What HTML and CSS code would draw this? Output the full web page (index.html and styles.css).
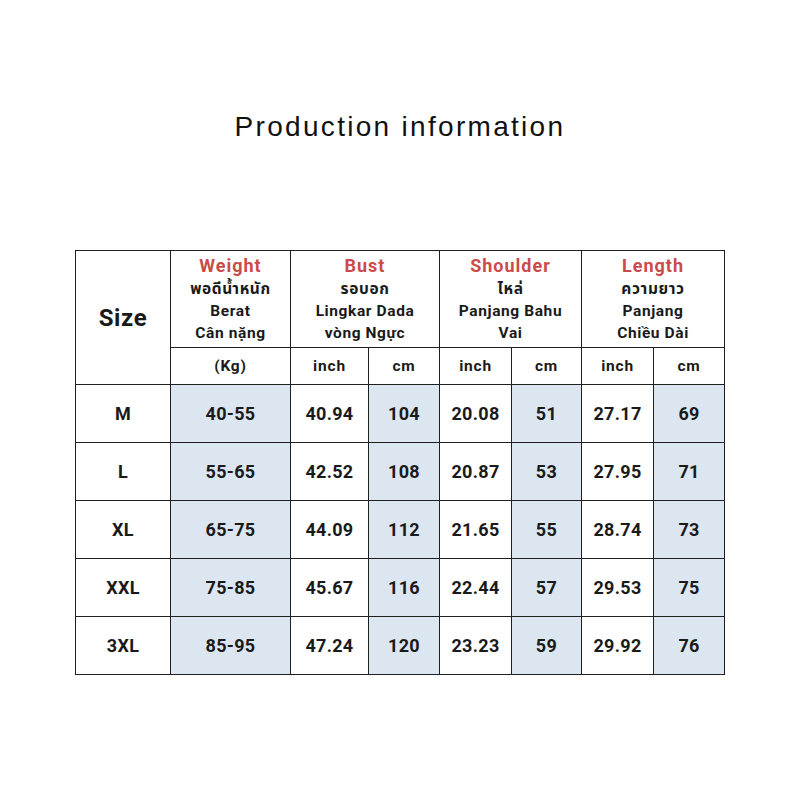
FILE: index.html
```html
<!DOCTYPE html>
<html>
<head>
<meta charset="utf-8">
<link rel="stylesheet" href="styles.css">
</head>
<body>
<div class="page">
  <h1 class="title">Production information</h1>
  <table class="size-table">
    <colgroup>
      <col class="c-size"><col class="c-weight"><col class="c-bi"><col class="c-bc"><col class="c-si"><col class="c-sc"><col class="c-li"><col class="c-lc">
    </colgroup>
    <tr class="head">
      <th rowspan="2" class="size-head">Size</th>
      <th><span class="red">Weight</span><br>พอดีน้ำหนัก<br>Berat<br>Cân nặng</th>
      <th colspan="2"><span class="red">Bust</span><br>รอบอก<br>Lingkar Dada<br>vòng Ngực</th>
      <th colspan="2"><span class="red">Shoulder</span><br>ไหล่<br>Panjang Bahu<br>Vai</th>
      <th colspan="2"><span class="red">Length</span><br>ความยาว<br>Panjang<br>Chiều Dài</th>
    </tr>
    <tr class="sub">
      <td>(Kg)</td><td>inch</td><td>cm</td><td>inch</td><td>cm</td><td>inch</td><td>cm</td>
    </tr>
    <tr class="row"><td>M</td><td class="s">40-55</td><td>40.94</td><td class="s">104</td><td>20.08</td><td class="s">51</td><td>27.17</td><td class="s">69</td></tr>
    <tr class="row"><td>L</td><td class="s">55-65</td><td>42.52</td><td class="s">108</td><td>20.87</td><td class="s">53</td><td>27.95</td><td class="s">71</td></tr>
    <tr class="row"><td>XL</td><td class="s">65-75</td><td>44.09</td><td class="s">112</td><td>21.65</td><td class="s">55</td><td>28.74</td><td class="s">73</td></tr>
    <tr class="row"><td>XXL</td><td class="s">75-85</td><td>45.67</td><td class="s">116</td><td>22.44</td><td class="s">57</td><td>29.53</td><td class="s">75</td></tr>
    <tr class="row"><td>3XL</td><td class="s">85-95</td><td>47.24</td><td class="s">120</td><td>23.23</td><td class="s">59</td><td>29.92</td><td class="s">76</td></tr>
  </table>
</div>
</body>
</html>
```

FILE: styles.css
```css
html, body {
  margin: 0;
  padding: 0;
  background: #fff;
}
.page {
  width: 800px;
  height: 800px;
  display: flex;
  flex-direction: column;
  align-items: center;
}
.title {
  margin: 110px 0 0 0;
  font-family: "Liberation Sans", Arial, sans-serif;
  font-weight: normal;
  font-size: 28px;
  line-height: 34px;
  letter-spacing: 2.3px;
  color: #111;
}
.size-table {
  margin-top: 106px;
  border-collapse: collapse;
  table-layout: fixed;
  width: 650px;
  font-family: Roboto, "Noto Sans", "Noto Sans Thai", "DejaVu Sans", sans-serif;
  color: #1a1a1a;
}
.c-size { width: 95px; }
.c-weight { width: 120px; }
.c-bi { width: 78px; }
.c-bc { width: 71px; }
.c-si { width: 72px; }
.c-sc { width: 70px; }
.c-li { width: 72px; }
.c-lc { width: 71px; }
.size-table th, .size-table td {
  border: 1px solid #1f1f1f;
  text-align: center;
  padding: 0;
}
.head th {
  height: 96px;
  font-size: 15.5px;
  font-weight: 700;
  line-height: 22px;
  letter-spacing: 0.6px;
}
.head .red {
  color: #cc4a4a;
  font-size: 18px;
  font-weight: 700;
  letter-spacing: 1px;
}
.head .size-head {
  font-size: 24px;
  font-weight: 700;
  letter-spacing: 0.6px;
}
.sub td {
  height: 36px;
  font-size: 15.5px;
  font-weight: 700;
  letter-spacing: 0.8px;
}
.row td {
  height: 57px;
  font-size: 18px;
  font-weight: 700;
  letter-spacing: 0.3px;
}
.row td.s {
  background: #dce6f0;
}
```
